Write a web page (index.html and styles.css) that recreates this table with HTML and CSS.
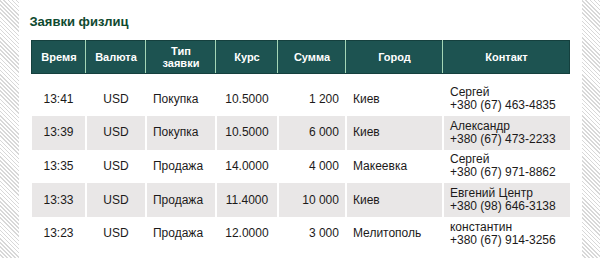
FILE: index.html
```html
<!DOCTYPE html>
<html lang="ru">
<head>
<meta charset="utf-8">
<link rel="stylesheet" href="styles.css">
</head>
<body>
<div class="page">
  <div class="stripes left"></div>
  <main class="content">
    <h2 class="title">Заявки физлиц</h2>
    <table class="orders">
      <colgroup>
        <col style="width:54px"><col style="width:60px"><col style="width:70px"><col style="width:62px"><col style="width:68px"><col style="width:97px"><col style="width:127px">
      </colgroup>
      <thead>
        <tr>
          <th>Время</th><th>Валюта</th><th>Тип<br>заявки</th><th>Курс</th><th>Сумма</th><th>Город</th><th>Контакт</th>
        </tr>
      </thead>
      <tbody>
        <tr class="spacer"><td colspan="7"></td></tr>
        <tr>
          <td class="c">13:41</td><td class="c">USD</td><td class="l">Покупка</td><td class="c">10.5000</td><td class="r">1 200</td><td class="l">Киев</td><td class="l">Сергей<br>+380 (67) 463-4835</td>
        </tr>
        <tr class="alt">
          <td class="c">13:39</td><td class="c">USD</td><td class="l">Покупка</td><td class="c">10.5000</td><td class="r">6 000</td><td class="l">Киев</td><td class="l">Александр<br>+380 (67) 473-2233</td>
        </tr>
        <tr>
          <td class="c">13:35</td><td class="c">USD</td><td class="l">Продажа</td><td class="c">14.0000</td><td class="r">4 000</td><td class="l">Макеевка</td><td class="l">Сергей<br>+380 (67) 971-8862</td>
        </tr>
        <tr class="alt">
          <td class="c">13:33</td><td class="c">USD</td><td class="l">Продажа</td><td class="c">11.4000</td><td class="r">10 000</td><td class="l">Киев</td><td class="l">Евгений Центр<br>+380 (98) 646-3138</td>
        </tr>
        <tr>
          <td class="c">13:23</td><td class="c">USD</td><td class="l">Продажа</td><td class="c">12.0000</td><td class="r">3 000</td><td class="l">Мелитополь</td><td class="l">константин<br>+380 (67) 914-3256</td>
        </tr>
      </tbody>
    </table>
  </main>
  <div class="stripes right"></div>
</div>
</body>
</html>
```

FILE: styles.css
```css
html, body {
  margin: 0;
  padding: 0;
  background: #fff;
}
body {
  font-family: "Liberation Sans", Arial, sans-serif;
  color: #1c1a1a;
}
.page {
  display: flex;
  width: 600px;
  height: 258px;
}
.stripes {
  background: repeating-linear-gradient(45deg, #fff 0, #fff 1.8px, #d8d8d8 1.8px, #d8d8d8 2.9px);
}
.stripes.left { width: 20px; }
.stripes.right { width: 18px; }
.content {
  flex: 1;
  padding: 0 12px 0 10px;
}
.title {
  margin: 14px 0 0 0;
  font-size: 13px;
  line-height: 16px;
  font-weight: bold;
  color: #0f4a30;
}
.orders {
  margin: 10px 0 0 2px;
  width: 538px;
  table-layout: fixed;
  border-collapse: collapse;
  font-size: 12px;
}
.orders th {
  background: #1d5351;
  color: #fff;
  font-size: 11px;
  font-weight: bold;
  line-height: 12px;
  height: 32px;
  padding: 0 4px;
  border: 1px solid #a4d6b6;
  text-align: center;
}
.orders thead tr th:first-child { border-left-color: #15403e; }
.orders thead tr th:last-child { border-right-color: #15403e; }
.orders th { border-top-color: #15403e; border-bottom-color: #15403e; }
.orders .spacer td {
  height: 9px;
  padding: 0;
  border: 0;
}
.orders td {
  height: 33.6px;
  padding: 0 6px;
  line-height: 13px;
  border-left: 2px solid #fff;
  box-sizing: border-box;
}
.orders td:first-child { border-left: 0; }
.orders tr.alt td { background: #e9e7e7; }
.orders td.c { text-align: center; }
.orders td.l { text-align: left; }
.orders td.r { text-align: right; }
```
